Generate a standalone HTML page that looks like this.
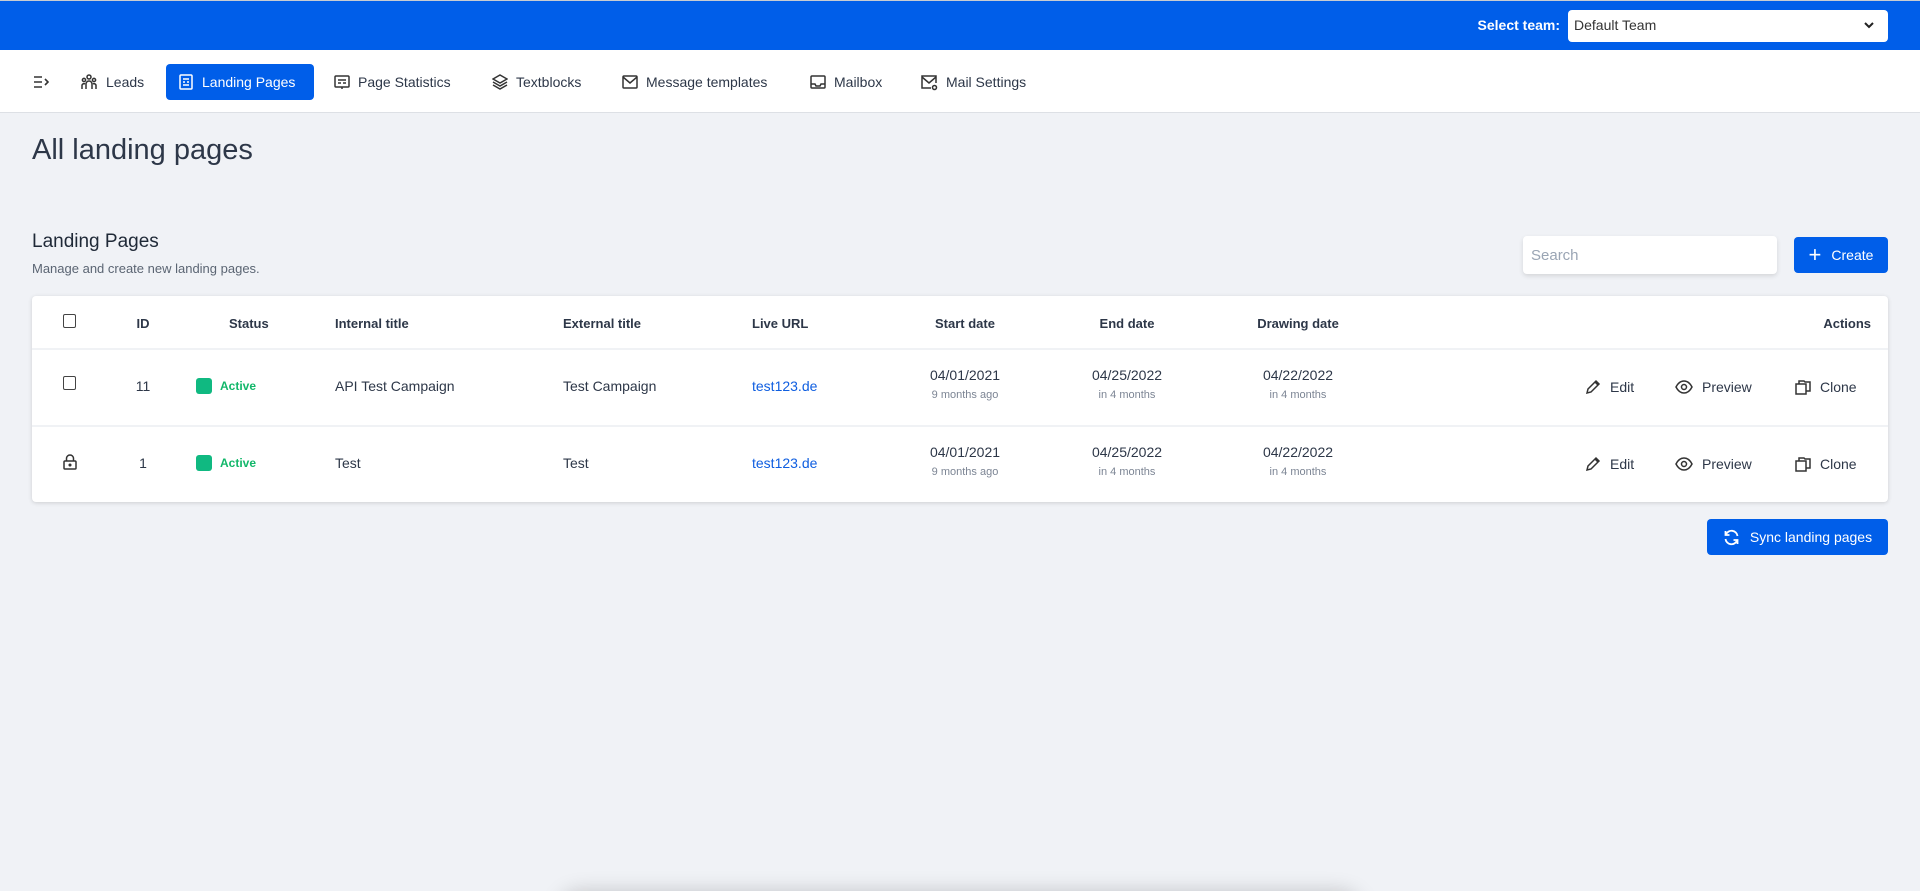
<!DOCTYPE html>
<html><head><meta charset="utf-8"><style>
*{box-sizing:border-box;margin:0;padding:0}
html{width:1920px;height:891px;overflow:hidden}
body{width:1920px;height:891px;overflow:hidden;background:#f0f2f6;font-family:"Liberation Sans",sans-serif;color:#333d4b;position:relative}
#wrap{position:absolute;left:0;top:0;width:1920px;height:891px;overflow:hidden}
.top{position:absolute;left:0;top:0;width:1920px;height:50px;background:#005ee9;border-top:1px solid #c8ccd2}
.top .lbl{position:absolute;right:360px;top:16px;color:#fff;font-weight:bold;font-size:14px}
.sel{position:absolute;left:1568px;top:9px;width:320px;height:32px;background:#fff;border-radius:4px;font-size:14px;padding:7px 6px;color:#333}
.sel svg{position:absolute;right:14px;top:12px}
.nav{position:absolute;left:0;top:50px;width:1920px;height:63px;background:#fff;border-bottom:1px solid #dde0e5}
.ni{position:absolute;top:14px;height:36px;display:flex;align-items:center;font-size:14px;color:#2d3748;gap:8px;white-space:nowrap}
.ni.act{background:#005ee9;color:#fff;border-radius:4px;padding:0 12px}
svg{display:block}
h1{position:absolute;left:32px;top:134px;font-size:29px;font-weight:normal;color:#2d3748}
h2{position:absolute;left:32px;top:231px;font-size:19px;font-weight:normal;color:#1f2937}
.sub{position:absolute;left:32px;top:261px;font-size:13px;color:#5b6573}
.search{position:absolute;left:1523px;top:236px;width:254px;height:38px;background:#fff;border-radius:4px;box-shadow:0 2px 5px rgba(0,0,0,.12);font-size:15px;color:#9aa5b4;padding:11px 8px}
.btn{position:absolute;background:#005ee9;color:#fff;border-radius:4px;font-size:14px;display:flex;align-items:center;justify-content:center;gap:10px}
.card{position:absolute;left:32px;top:296px;width:1856px;height:206px;background:#fff;border-radius:4px;box-shadow:0 1px 4px rgba(0,0,0,.15)}
.row{position:absolute;left:0;width:1856px;border-bottom:2px solid #f0f2f5}
.c{position:absolute;font-size:14px;color:#2d3748;white-space:nowrap}
.hd .c{font-weight:bold;font-size:13px}
.cb{position:absolute;left:31px;width:13px;height:14px;border:1.5px solid #444;border-radius:2px}
.ctr{text-align:center;transform:translateX(-50%)}
.small{font-size:11px;color:#7c8594;margin-top:6px}
.act{color:#12b76a}
.dot{display:inline-block;width:16px;height:16px;background:#10b981;border-radius:3px;vertical-align:middle;margin-right:8px}
.lnk{color:#0f5ee0}
.ac{position:absolute;display:flex;align-items:center;gap:9px;font-size:14px;color:#2d3748}
.shadow{position:absolute;left:560px;top:893px;width:800px;height:40px;border-radius:30px;box-shadow:0 0 22px rgba(0,0,0,.22);background:#f0f2f6}
</style></head><body><div id="wrap">
<div class="top"><span class="lbl">Select team:</span>
<div class="sel">Default Team<svg width="10" height="7" viewBox="0 0 10 7"><path d="M1 1l4 4 4-4" stroke="#222" stroke-width="2" fill="none"/></svg></div></div>
<div class="nav">
<div class="ni" style="left:33px"><svg width="16" height="14" viewBox="0 0 16 14"><path d="M1 2h8M1 7h8M1 12h8M12 4l3 3-3 3" stroke="#333" stroke-width="1.6" fill="none"/></svg></div>
<div class="ni" style="left:80px"><svg width="18" height="18" viewBox="0 0 18 18" fill="none" stroke="#333" stroke-width="1.5"><circle cx="9" cy="4" r="2"/><circle cx="4" cy="7" r="1.6"/><circle cx="14" cy="7" r="1.6"/><path d="M6 16v-5a3 3 0 016 0v5M2 16v-3a2 2 0 013-2M16 16v-3a2 2 0 00-3-2"/></svg>Leads</div>
<div class="ni act" style="left:166px;width:148px"><svg width="16" height="16" viewBox="0 0 16 16" fill="none" stroke="#fff" stroke-width="1.5"><rect x="2" y="1" width="12" height="14" rx="1"/><path d="M5 5h6M5 8h2M9 8h2M5 11h6"/></svg>Landing Pages</div>
<div class="ni" style="left:334px"><svg width="16" height="16" viewBox="0 0 16 16" fill="none" stroke="#333" stroke-width="1.5"><rect x="1" y="2" width="14" height="11" rx="1"/><path d="M4 6h8M4 9h3M9 9h3M8 13v2"/></svg>Page Statistics</div>
<div class="ni" style="left:492px"><svg width="16" height="16" viewBox="0 0 16 16" fill="none" stroke="#333" stroke-width="1.5"><path d="M8 1l7 4-7 4-7-4zM1 8l7 4 7-4M1 11l7 4 7-4"/></svg>Textblocks</div>
<div class="ni" style="left:622px"><svg width="16" height="16" viewBox="0 0 16 16" fill="none" stroke="#333" stroke-width="1.5"><rect x="1" y="2" width="14" height="12" rx="1"/><path d="M1 3l7 6 7-6"/></svg>Message templates</div>
<div class="ni" style="left:810px"><svg width="16" height="16" viewBox="0 0 16 16" fill="none" stroke="#333" stroke-width="1.5"><rect x="1" y="2" width="14" height="12" rx="1"/><path d="M1 10h4l1 2h4l1-2h4"/></svg>Mailbox</div>
<div class="ni" style="left:921px"><svg width="17" height="17" viewBox="0 0 17 17" fill="none" stroke="#333" stroke-width="1.5"><path d="M10 14H1V2h14v7"/><path d="M1 3l7 6 7-6"/><circle cx="13.5" cy="13.5" r="2"/></svg>Mail Settings</div>
</div>
<h1>All landing pages</h1>
<h2>Landing Pages</h2>
<div class="sub">Manage and create new landing pages.</div>
<div class="search">Search</div>
<div class="btn" style="left:1794px;top:237px;width:94px;height:36px"><span style="font-size:22px;font-weight:300;line-height:1">+</span>Create</div>
<div class="card">
<div class="row hd" style="top:0;height:54px">
<div class="cb" style="top:18px"></div>
<div class="c ctr" style="left:111px;top:20px">ID</div>
<div class="c" style="left:197px;top:20px">Status</div>
<div class="c" style="left:303px;top:20px">Internal title</div>
<div class="c" style="left:531px;top:20px">External title</div>
<div class="c" style="left:720px;top:20px">Live URL</div>
<div class="c ctr" style="left:933px;top:20px">Start date</div>
<div class="c ctr" style="left:1095px;top:20px">End date</div>
<div class="c ctr" style="left:1266px;top:20px">Drawing date</div>
<div class="c" style="right:17px;top:20px">Actions</div>
</div>
<div class="row" style="top:54px;height:77px">
<div class="cb" style="top:26px"></div>
<div class="c ctr" style="left:111px;top:28px">11</div>
<div class="c" style="left:164px;top:27px"><span class="dot"></span><span class="act" style="font-size:12px;font-weight:bold">Active</span></div>
<div class="c" style="left:303px;top:28px">API Test Campaign</div>
<div class="c" style="left:531px;top:28px">Test Campaign</div>
<div class="c lnk" style="left:720px;top:28px">test123.de</div>
<div class="c ctr" style="left:933px;top:17px">04/01/2021<div class="small">9 months ago</div></div>
<div class="c ctr" style="left:1095px;top:17px">04/25/2022<div class="small">in 4 months</div></div>
<div class="c ctr" style="left:1266px;top:17px">04/22/2022<div class="small">in 4 months</div></div>
<div class="ac" style="left:1553px;top:29px"><svg width="16" height="16" viewBox="0 0 16 16" fill="none" stroke="#333" stroke-width="1.5"><path d="M2 14l1-4 8-8 3 3-8 8zM10 3l3 3"/></svg>Edit</div>
<div class="ac" style="left:1643px;top:29px"><svg width="18" height="16" viewBox="0 0 18 16" fill="none" stroke="#333" stroke-width="1.5"><path d="M1 8c2-4 5-6 8-6s6 2 8 6c-2 4-5 6-8 6S3 12 1 8z"/><circle cx="9" cy="8" r="2.5"/></svg>Preview</div>
<div class="ac" style="left:1763px;top:29px"><svg width="16" height="16" viewBox="0 0 16 16" fill="none" stroke="#333" stroke-width="1.5"><rect x="1" y="5" width="10" height="10"/><path d="M4 5V2h5l1 1h5v9h-4"/></svg>Clone</div>
</div>
<div class="row" style="top:131px;height:75px;border:none">
<svg style="position:absolute;left:31px;top:27px" width="14" height="16" viewBox="0 0 14 16" fill="none" stroke="#333" stroke-width="1.5"><rect x="1" y="7" width="12" height="8" rx="1"/><path d="M3.5 7V4.5a3.5 3.5 0 017 0V7"/><circle cx="7" cy="11" r=".8" fill="#333"/></svg>
<div class="c ctr" style="left:111px;top:28px">1</div>
<div class="c" style="left:164px;top:27px"><span class="dot"></span><span class="act" style="font-size:12px;font-weight:bold">Active</span></div>
<div class="c" style="left:303px;top:28px">Test</div>
<div class="c" style="left:531px;top:28px">Test</div>
<div class="c lnk" style="left:720px;top:28px">test123.de</div>
<div class="c ctr" style="left:933px;top:17px">04/01/2021<div class="small">9 months ago</div></div>
<div class="c ctr" style="left:1095px;top:17px">04/25/2022<div class="small">in 4 months</div></div>
<div class="c ctr" style="left:1266px;top:17px">04/22/2022<div class="small">in 4 months</div></div>
<div class="ac" style="left:1553px;top:29px"><svg width="16" height="16" viewBox="0 0 16 16" fill="none" stroke="#333" stroke-width="1.5"><path d="M2 14l1-4 8-8 3 3-8 8zM10 3l3 3"/></svg>Edit</div>
<div class="ac" style="left:1643px;top:29px"><svg width="18" height="16" viewBox="0 0 18 16" fill="none" stroke="#333" stroke-width="1.5"><path d="M1 8c2-4 5-6 8-6s6 2 8 6c-2 4-5 6-8 6S3 12 1 8z"/><circle cx="9" cy="8" r="2.5"/></svg>Preview</div>
<div class="ac" style="left:1763px;top:29px"><svg width="16" height="16" viewBox="0 0 16 16" fill="none" stroke="#333" stroke-width="1.5"><rect x="1" y="5" width="10" height="10"/><path d="M4 5V2h5l1 1h5v9h-4"/></svg>Clone</div>
</div>
</div>
<div class="btn" style="left:1707px;top:519px;width:181px;height:36px"><svg width="17" height="17" viewBox="0 0 17 17" fill="none" stroke="#fff" stroke-width="1.8"><path d="M14.5 7A6 6 0 003 5.5M2.5 10A6 6 0 0014 11.5"/><path d="M2.5 2v4h4M14.5 15v-4h-4"/></svg>Sync landing pages</div>
<div class="shadow"></div>
</div></body></html>
